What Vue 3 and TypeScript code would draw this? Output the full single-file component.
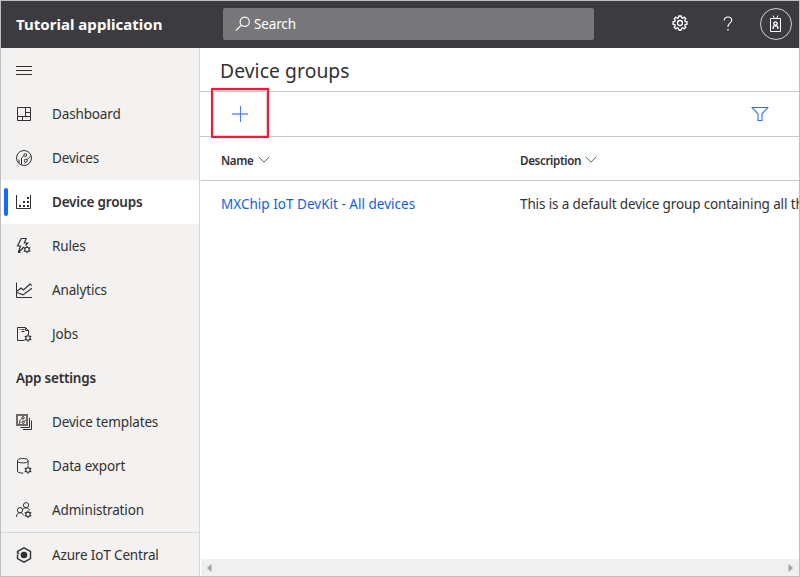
<script setup lang="ts">
interface NavItem {
  label: string
  icon: string
  active?: boolean
}

const primary: NavItem[] = [
  { label: 'Dashboard', icon: 'dashboard' },
  { label: 'Devices', icon: 'devices' },
  { label: 'Device groups', icon: 'groups', active: true },
  { label: 'Rules', icon: 'rules' },
  { label: 'Analytics', icon: 'analytics' },
  { label: 'Jobs', icon: 'jobs' },
]

const settings: NavItem[] = [
  { label: 'Device templates', icon: 'templates' },
  { label: 'Data export', icon: 'export' },
  { label: 'Administration', icon: 'admin' },
]

const columns: string[] = ['Name', 'Description']
</script>

<template>
  <div class="app">
    <svg class="defs" width="0" height="0">
      <symbol id="dashboard" viewBox="0 0 16 16">
        <path d="M1.5 1.5h13v13h-13zM9.5 1.5v9M1.5 10.5h13M9.5 6.5h5M6.5 10.5v4" />
      </symbol>
      <symbol id="devices" viewBox="0 0 16 16">
        <circle cx="8" cy="8" r="7.5" />
        <circle cx="9.3" cy="5" r="1.4" />
        <circle cx="9.8" cy="10.7" r="1.5" />
        <path d="M8 5.6L5.5 8v6.5M3 13.300V9.500M11 9.700L14.800 6M9.800 12.200L8.500 13.500" />
      </symbol>
      <symbol id="groups" viewBox="0 0 16 16">
        <path d="M.5 1v13.5h14V1" />
        <path class="solid" d="M3 11h2v2H3zM7 11h2v2H7zM11 11h2v2h-2zM7 7h2v2H7zM11 7h2v2h-2zM11 3h2v2h-2z" />
      </symbol>
      <symbol id="gearlet" viewBox="0 0 8 8">
        <circle cx="4" cy="4" r="2.2" stroke-width="1.1" />
        <path stroke-width="1.2" d="M4 .3v1.5M4 6.2v1.5M.7 2.1l1.3.8M6 5.1l1.3.8M.7 5.9l1.3-.8M6 2.9l1.3-.8" />
      </symbol>
      <symbol id="rules" viewBox="0 0 16 16">
        <path d="M5.2.5h5L8.3 5h3.4L9.5 7.5M5.2.5L1.5 8h3L2.3 14.5 6 11M7.8 8.8L6 11M2.3 14.5h2.3" stroke-width="1.2" />
        <use href="#gearlet" x="7" y="7.5" width="8" height="8" />
      </symbol>
      <symbol id="analytics" viewBox="0 0 16 16">
        <path d="M.5.5v15H16" />
        <path stroke-width="1.2" d="M1 9.2l4-3.2 2.500 2L14 2l1.800 1.500M1 10.500l6 2.400 9-6.600" />
      </symbol>
      <symbol id="jobs" viewBox="0 0 16 16">
        <path d="M8.5 14.5h-7v-13h8l3 3v4.2M9.5 1.5v3h3M3.5 3.500h1M5.500 3.500h3M5.500 5.500h3" />
        <use href="#gearlet" x="8" y="8" width="8" height="8" />
      </symbol>
      <symbol id="templates" viewBox="0 0 16 16">
        <path class="frame" d="M1 1h10v10H1z" />
        <path d="M13.500 4v9.500H4.500M15.500 6.500v9H7" />
        <circle cx="7" cy="3.8" r="1.2" />
        <circle cx="7.2" cy="8.2" r="1.2" />
        <path d="M5.8 4.500L3.800 6.500v4M8.400 7.300l1.600-1.600" />
      </symbol>
      <symbol id="export" viewBox="0 0 16 16">
        <ellipse cx="6.8" cy="2.7" rx="5.3" ry="2.2" />
        <path d="M1.5 2.7v10.6c0 1 2.3 1.8 5.8 1.8M12.1 2.7v5" />
        <use href="#gearlet" x="8" y="8" width="8" height="8" />
      </symbol>
      <symbol id="admin" viewBox="0 0 16 16">
        <circle cx="10" cy="3.2" r="2.6" />
        <circle cx="4" cy="8.2" r="2.6" />
        <path d="M.5 15c.2-2.8 1.5-4.3 3.5-4.3 1.7 0 3 .9 3.4 2.6M6.5 7.8c.6-1.2 1.8-2 3.5-2 1.9 0 3.2 1 3.6 2.6" />
        <use href="#gearlet" x="8" y="8.300" width="8" height="8" />
      </symbol>
    </svg>

    <header class="topbar">
      <div class="brand">Tutorial application</div>
      <div class="search">
        <svg class="search-icon" width="16" height="16" viewBox="0 0 16 16">
          <circle cx="9.7" cy="5.7" r="4.6" />
          <path d="M6.3 9.1L.8 14.6" />
        </svg>
        <span>Search</span>
      </div>
      <div class="tools">
        <svg class="cog" width="16" height="16" viewBox="0 0 16 16">
          <path d="M6.8 1h2.4l.4 1.8 1 .4 1.6-1 1.6 1.6-1 1.6.4 1 1.8.4v2.4l-1.8.4-.4 1 1 1.6-1.6 1.6-1.6-1-1 .4L9.2 15H6.8l-.4-1.8-1-.4-1.6 1-1.6-1.6 1-1.6-.4-1L1 9.2V6.8l1.8-.4.4-1-1-1.6 1.6-1.6 1.6 1 1-.4z" />
          <circle cx="8" cy="8" r="2.5" />
        </svg>
        <svg class="help" width="10" height="16" viewBox="0 0 10 16">
          <path d="M1.2 4.5C1.2 2.2 2.7 1 5 1c2.2 0 3.7 1.2 3.7 3.2C8.7 7 5 7.3 5 10.2v.8" />
          <path class="dot" d="M4.3 13h1.4v1.5H4.3z" />
        </svg>
        <div class="avatar">
          <svg width="14" height="18" viewBox="0 0 14 18">
            <path d="M1.5 3.500h10v13h-10zM4 .5l1.500 3M9 .5l-1.500 3" />
            <path class="person" d="M4.200 14v-1.500c0-1 .8-1.600 2.300-1.600s2.300.6 2.300 1.600V14" />
            <circle class="person" cx="6.500" cy="8.600" r="1.700" />
          </svg>
        </div>
      </div>
    </header>

    <div class="body">
      <nav class="sidebar">
        <div class="row menu">
          <svg width="16" height="10" viewBox="0 0 16 10"><path d="M0 .5h16M0 4.5h16M0 8.5h16" /></svg>
        </div>
        <div v-for="item in primary" :key="item.label" class="row" :class="{ active: item.active }">
          <svg class="icon" width="16" height="16"><use :href="'#' + item.icon" /></svg>
          <span>{{ item.label }}</span>
        </div>
        <div class="row section">App settings</div>
        <div v-for="item in settings" :key="item.label" class="row">
          <svg class="icon" width="16" height="16"><use :href="'#' + item.icon" /></svg>
          <span>{{ item.label }}</span>
        </div>
        <div class="row central">
          <svg class="hex" width="16" height="16" viewBox="0 0 16 16">
            <path d="M1.5 5V4.400L8 .9l6.500 3.500v7.200L8 15.100l-6.500-3.500V7.500M.8 5.500l2.400 1.200" />
            <circle cx="8" cy="8" r="3.3" />
          </svg>
          <span>Azure IoT Central</span>
        </div>
      </nav>

      <main class="main">
        <h1>Device groups</h1>
        <div class="commands">
          <button class="add" aria-label="New">
            <svg width="16" height="16" viewBox="0 0 16 16"><path class="h" d="M0 8h16" /><path d="M8.5 0v16" /></svg>
          </button>
          <svg class="filter" width="18" height="16" viewBox="0 0 18 16">
            <path d="M1.2 1.5h15.6L11 7.8v6.7H7V7.8z" />
          </svg>
        </div>
        <div class="grid head">
          <div v-for="column in columns" :key="column" class="cell">
            <span>{{ column }}</span>
            <svg width="12" height="7" viewBox="0 0 12 7"><path d="M.5.7L6 6.2 11.5.7" /></svg>
          </div>
        </div>
        <div class="grid record">
          <a class="cell link">MXChip IoT DevKit - All devices</a>
          <div class="cell desc">This is a default device group containing all the devices</div>
        </div>
        <div class="scrollbar">
          <svg width="5" height="8" viewBox="0 0 5 8"><path d="M4.5 0v8L0 4z" /></svg>
          <svg width="5" height="8" viewBox="0 0 5 8"><path d="M.5 0v8L5 4z" /></svg>
        </div>
      </main>
    </div>
  </div>
</template>

<style>
body {
  margin: 0;
  overflow: hidden;
}
</style>

<style scoped>
.app {
  box-sizing: border-box;
  width: 800px;
  height: 577px;
  border: 1px solid #bfbfbf;
  display: flex;
  flex-direction: column;
  overflow: hidden;
  background: #fff;
  color: #323130;
  font: 13.5px/20px "Noto Sans", "Open Sans", sans-serif;
}
.defs { display: none; }
svg { display: block; flex: none; fill: none; stroke: #323130; stroke-width: 1; }
.solid { fill: #323130; stroke: none; }
.frame { stroke: #6b6a69; stroke-width: 2; }
.topbar {
  height: 47px;
  flex: none;
  background: #3c3b40;
  color: #fff;
  display: flex;
}
.brand {
  width: 207px;
  padding: 13px 0 0 15px;
  font-size: 15px;
  font-weight: 700;
  letter-spacing: 0.03px;
  white-space: nowrap;
}
.search {
  width: 359px;
  height: 32px;
  margin-top: 7px;
  padding-left: 12px;
  display: flex;
  align-items: center;
  gap: 3px;
  border-radius: 2px;
  background: #777779;
  letter-spacing: -0.15px;
}
.search-icon { stroke: #fff; stroke-width: 1.2; }
.tools { display: flex; margin-left: 78px; }
.cog { margin-top: 14px; stroke: #fff; stroke-width: 1.3; }
.help { margin: 15px 0 0 35px; stroke: #fff; stroke-width: 1.1; }
.help .dot { fill: #fff; stroke: none; }
.avatar {
  box-sizing: border-box;
  width: 32px;
  height: 32px;
  margin: 7px 0 0 27px;
  border: 1px solid #d0d0d2;
  border-radius: 50%;
  display: flex;
  justify-content: center;
  padding-top: 6px;
}
.avatar svg { stroke: #fff; }
.person { stroke-width: 1.4; }
.body { display: flex; flex: 1; min-height: 0; }
.sidebar {
  width: 198px;
  flex: none;
  background: #f3f2f1;
  border-right: 1px solid #d8d8d8;
  letter-spacing: -0.15px;
}
.row {
  box-sizing: border-box;
  height: 44px;
  padding-left: 15px;
  display: flex;
  align-items: center;
  gap: 20px;
  white-space: nowrap;
}
.menu { padding-top: 1px; }
.active {
  background: #fff;
  padding-left: 3px;
  font-weight: 600;
  letter-spacing: -0.2px;
}
.active::before {
  content: "";
  width: 4px;
  height: 28px;
  border-radius: 2px;
  background: #0f6cff;
  margin-right: -12px;
}
.section { font-weight: 600; letter-spacing: -0.22px; }
.central { border-top: 1px solid #d8d8d8; padding-top: 1px; }
.hex { stroke-width: 1.4; }
.hex circle { fill: #323130; stroke: none; }
.main { flex: 1; min-width: 0; display: flex; flex-direction: column; }
h1 {
  margin: 0;
  height: 43px;
  padding: 10px 0 0 20px;
  box-sizing: border-box;
  font-size: 19.3px;
  line-height: 26px;
  font-weight: 450;
  letter-spacing: 0.08px;
}
.commands {
  box-sizing: border-box;
  height: 46px;
  flex: none;
  border-top: 1px solid #c8c8c8;
  border-bottom: 1px solid #c8c8c8;
  display: flex;
  align-items: center;
  justify-content: space-between;
  padding: 0 30px 0 11px;
}
.add {
  box-sizing: border-box;
  width: 58px;
  height: 50px;
  margin: -4px 0 -2px;
  padding: 2px 0 0;
  border: 2px solid #ee1c3a;
  box-shadow: inset 0 0 0 1px #f9c8cf, 0 0 1px #f29aa8;
  background: none;
  display: flex;
  align-items: center;
  justify-content: center;
}
.add svg { stroke: #5078fa; }
.add .h { stroke: #9aa5ff; stroke-width: 2; }
.filter { stroke: #3b68fb; stroke-width: 1.1; }
.grid { display: grid; grid-template-columns: 299px 1fr; padding-left: 21px; height: 43px; }
.head { margin-left: 1px; padding-left: 20px; border-bottom: 1px solid #c8c8c8; font-size: 11.6px; font-weight: 600; letter-spacing: -0.35px; }
.head .cell { display: flex; align-items: center; gap: 4px; padding-top: 4px; }
.head svg { margin-top: -2px; stroke: #605e5c; }
.cell { min-width: 0; white-space: nowrap; overflow: hidden; }
.record { height: 46px; line-height: 46px; }
.link { color: #1062dc; letter-spacing: 0.02px; }
.desc { letter-spacing: -0.13px; }
.scrollbar {
  margin: auto 0 0 1px;
  height: 17px;
  padding: 0 6px;
  background: #f0f0f0;
  display: flex;
  align-items: center;
  justify-content: space-between;
}
.scrollbar svg { fill: #a0a0a0; stroke: none; }
</style>
